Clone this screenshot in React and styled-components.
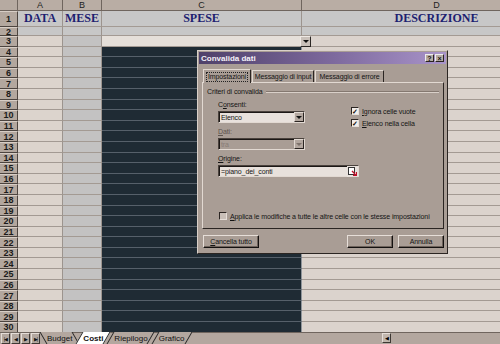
import React from 'react';
import styled, { createGlobalStyle } from 'styled-components';

const GlobalStyle = createGlobalStyle`
  html, body { margin: 0; padding: 0; background: #b1a59d; }
  body { width: 500px; height: 344px; overflow: hidden; font-family: 'Liberation Sans', Arial, sans-serif; }
`;

const COLS = [
  { key: 'A', width: 45, bg: '#dcd4cd' },
  { key: 'B', width: 39, bg: '#c3c2c2' },
  { key: 'C', width: 200, bg: '#1f2b34' },
  { key: 'D', width: 270, bg: '#dbd3cd' },
];

const Screen = styled.div`
  position: relative;
  width: 500px;
  height: 344px;
  overflow: hidden;
  display: flex;
  flex-direction: column;
`;

const Sheet = styled.div`
  height: 333px;
  overflow: hidden;
  display: flex;
  flex-direction: column;
`;

const Row = styled.div`
  display: flex;
  flex: none;
  height: ${p => p.h}px;
`;

const Corner = styled.div`
  width: 18px;
  flex: none;
  background: #b6aaa1;
  border-right: 1px solid #6f655e;
  border-bottom: 1px solid #6f655e;
  box-sizing: border-box;
`;

const ColHead = styled.div`
  width: ${p => p.w}px;
  flex: none;
  box-sizing: border-box;
  background: #b9ada4;
  border-right: 1px solid #6f655e;
  border-bottom: 1px solid #6f655e;
  font-size: 9px;
  line-height: 10px;
  color: #222;
  text-align: center;
`;

const RowHead = styled.div`
  width: 18px;
  flex: none;
  box-sizing: border-box;
  background: #b3a79e;
  border-top: 1px solid #d8cec6;
  border-right: 1px solid #4c443f;
  border-bottom: 1px solid #4c443f;
  font-size: 9px;
  font-weight: bold;
  color: #1a1a1a;
  display: flex;
  align-items: center;
  justify-content: center;
`;

const Cell = styled.div`
  width: ${p => p.w}px;
  flex: none;
  box-sizing: border-box;
  background: ${p => p.bg};
  border-right: 1px solid ${p => (p.dark ? '#8e949a' : '#9c948e')};
  border-bottom: 1px solid ${p => (p.dark ? '#56606a' : '#a39a93')};
  display: flex;
  align-items: center;
  justify-content: center;
`;

const Title = styled.span`
  font-family: 'Liberation Serif', 'Times New Roman', serif;
  font-weight: bold;
  font-size: 12px;
  color: #1d2170;
`;

const DropArrow = styled.div`
  position: absolute;
  left: 300px;
  top: 36px;
  width: 11px;
  height: 11px;
  box-sizing: border-box;
  background: #c9c0b9;
  border: 1px solid #2b2724;
  border-top-color: #efe9e4;
  border-left-color: #efe9e4;
  display: flex;
  align-items: center;
  justify-content: center;
  &::after {
    content: '';
    border-left: 3px solid transparent;
    border-right: 3px solid transparent;
    border-top: 3px solid #111;
  }
`;

/* sheet tabs */
const TabBar = styled.div`
  height: 11px;
  flex: none;
  background: #b3a79f;
  border-top: 1px solid #6f655e;
  display: flex;
  align-items: stretch;
  font-size: 8px;
  position: relative;
  padding-left: 1px;
`;

const NavBtn = styled.div`
  width: 9px;
  flex: none;
  box-sizing: border-box;
  border: 1px solid #3e3833;
  border-top-color: #e6ded8;
  border-left-color: #e6ded8;
  background: #b3a79f;
  display: flex;
  align-items: center;
  justify-content: center;
  font-size: 5px;
  letter-spacing: -1px;
  color: #111;
  margin-right: 1px;
`;

const SheetTab = styled.div`
  position: relative;
  padding: 0 4px;
  margin-left: ${p => (p.first ? 2 : 0)}px;
  margin-right: 3px;
  display: flex;
  align-items: center;
  color: #111;
  font-weight: ${p => (p.active ? 'bold' : 'normal')};
  z-index: ${p => (p.active ? 2 : 1)};
  &::before {
    content: '';
    position: absolute;
    inset: -1px 0 0 0;
    background: ${p => (p.active ? '#ffffff' : '#b3a79f')};
    border-left: 1px solid #222;
    border-right: 1px solid #222;
    transform: skewX(${p => (p.left ? '30deg' : '-30deg')});
    z-index: -1;
  }
`;

const ScrollArrow = styled.div`
  position: absolute;
  left: 382px;
  top: 0;
  width: 9px;
  height: 10px;
  box-sizing: border-box;
  border: 1px solid #3e3833;
  border-top-color: #e6ded8;
  border-left-color: #e6ded8;
  background: #c1b6ad;
  font-size: 5px;
  display: flex;
  align-items: center;
  justify-content: center;
`;

/* dialog */
const Dialog = styled.div`
  position: absolute;
  left: 197px;
  top: 50px;
  width: 251px;
  height: 204px;
  box-sizing: border-box;
  background: #a99d95;
  border: 1px solid #2b2522;
  border-top-color: #d9d0c9;
  border-left-color: #d9d0c9;
  font-family: 'Liberation Sans', Arial, sans-serif;
  font-size: 7px;
  letter-spacing: -0.1px;
  color: #141414;
  display: flex;
  flex-direction: column;
  white-space: nowrap;
`;

const TitleBar = styled.div`
  height: 12px;
  margin: 1px 1px 0 1px;
  background: linear-gradient(90deg, #4f416a 0%, #7e6a9e 55%, #a994c9 100%);
  display: flex;
  align-items: center;
  padding: 0 2px;
  color: #f4f0f8;
  font-weight: bold;
  font-size: 8px;
  letter-spacing: 0;
`;

const TitleText = styled.span`
  flex: 1;
`;

const CapBtn = styled.div`
  width: 9px;
  height: 8px;
  box-sizing: border-box;
  background: #b7aca4;
  border: 1px solid #2b2522;
  border-top-color: #eee;
  border-left-color: #eee;
  margin-left: 1px;
  font-size: 7px;
  font-weight: bold;
  color: #111;
  display: flex;
  align-items: center;
  justify-content: center;
  line-height: 1;
`;

const Tabs = styled.div`
  display: flex;
  margin: 5px 0 0 5px;
  height: 13px;
  position: relative;
  z-index: 1;
`;

const DTab = styled.div`
  box-sizing: border-box;
  width: ${p => p.w}px;
  height: ${p => (p.active ? 14 : 12)}px;
  margin-top: ${p => (p.active ? 0 : 1)}px;
  background: #a99d95;
  border: 1px solid #e2d9d2;
  border-right-color: #2b2522;
  border-bottom: none;
  display: flex;
  align-items: center;
  justify-content: center;
  margin-right: 1px;
  & > span {
    border: ${p => (p.active ? '1px dotted #222' : '1px solid transparent')};
    padding: 0 1px;
    line-height: 8px;
  }
`;

const Panel = styled.div`
  margin: 0 3px 0 4px;
  height: 147px;
  box-sizing: border-box;
  border: 1px solid #e2d9d2;
  border-right-color: #2b2522;
  border-bottom-color: #2b2522;
  padding: 5px 4px 0 4px;
  display: flex;
  flex-direction: column;
`;

const GroupHead = styled.div`
  display: flex;
  align-items: center;
  gap: 3px;
  &::after {
    content: '';
    flex: 1;
    height: 0;
    border-top: 1px solid #847870;
    border-bottom: 1px solid #d9d0c9;
  }
`;

const FormGrid = styled.div`
  display: grid;
  grid-template-columns: 133px 1fr;
  padding-left: 11px;
  margin-top: 5px;
`;

const Field = styled.div`
  display: flex;
  flex-direction: column;
  gap: 2px;
  padding-left: ${p => p.pl || 0}px;
  margin-bottom: ${p => p.mb || 0}px;
  color: ${p => (p.disabled ? '#5e544e' : '#141414')};
`;

const Label = styled.span`
  line-height: 9px;
`;

const Select = styled.div`
  width: ${p => p.w}px;
  height: 12px;
  box-sizing: border-box;
  background: ${p => (p.disabled ? '#a99d95' : '#e8e1dc')};
  border: 1px solid #4a423d;
  border-bottom-color: #e2d9d2;
  border-right-color: #e2d9d2;
  box-shadow: inset 1px 1px 0 #1c1816;
  display: flex;
  align-items: center;
  padding-left: 2px;
  color: ${p => (p.disabled ? '#877c75' : '#141414')};
`;

const SelectText = styled.span`
  flex: 1;
`;

const SelBtn = styled.div`
  width: 10px;
  height: 10px;
  box-sizing: border-box;
  background: #b3a79f;
  border: 1px solid #2b2522;
  border-top-color: #e2d9d2;
  border-left-color: #e2d9d2;
  display: flex;
  align-items: center;
  justify-content: center;
  &::after {
    content: '';
    border-left: 3px solid transparent;
    border-right: 3px solid transparent;
    border-top: 3px solid ${p => (p.disabled ? '#7c716a' : '#111')};
  }
`;

const Checks = styled.div`
  display: flex;
  flex-direction: column;
  gap: 4px;
  padding-top: 7px;
`;

const Check = styled.div`
  display: flex;
  align-items: center;
  gap: 3px;
`;

const Box = styled.div`
  width: 8px;
  height: 8px;
  flex: none;
  box-sizing: border-box;
  background: ${p => (p.checked ? '#f2eeea' : '#c9bfb8')};
  border: 1px solid #2b2522;
  border-right-color: #e6ded8;
  border-bottom-color: #e6ded8;
  display: flex;
  align-items: center;
  justify-content: center;
  font-size: 7px;
  font-weight: bold;
  line-height: 1;
  color: #111;
`;

const RefBtn = styled.div`
  width: 11px;
  height: 11px;
  flex: none;
  background: #e8e1dc;
  display: flex;
  align-items: center;
  justify-content: center;
`;

const Spacer = styled.div`
  flex: 1;
`;

const ApplyRow = styled(Check)`
  padding-left: 12px;
  margin-bottom: 8px;
`;

const Footer = styled.div`
  display: flex;
  align-items: center;
  margin: 6px 3px 0 5px;
`;

const Button = styled.div`
  width: ${p => p.w}px;
  height: 13px;
  box-sizing: border-box;
  border: 1px solid #141110;
  border-top-color: #e6ded8;
  border-left-color: #e6ded8;
  box-shadow: inset -1px -1px 0 #6d625b;
  margin-left: ${p => p.ml || 0}px;
  display: flex;
  align-items: center;
  justify-content: center;
`;

const rowHeights = [16, 9, ...Array(28).fill(10.6)];
const HEADINGS = { A: 'DATA', B: 'MESE', C: 'SPESE', D: 'DESCRIZIONE' };

function SheetRow({ n, h }) {
  return (
    <Row h={h}>
      <RowHead>{n}</RowHead>
      {COLS.map(c => {
        let bg = c.bg;
        let dark = false;
        if (n <= 2) bg = '#c7c7c7';
        else if (c.key === 'C' && n === 3) bg = '#e5dfd9';
        else if (c.key === 'C') dark = true;
        return (
          <Cell key={c.key} w={c.width} bg={bg} dark={dark}>
            {n === 1 && <Title>{HEADINGS[c.key]}</Title>}
          </Cell>
        );
      })}
    </Row>
  );
}

export default function App() {
  return (
    <Screen>
      <GlobalStyle />
      <Sheet>
        <Row h={11}>
          <Corner />
          {COLS.map(c => (
            <ColHead key={c.key} w={c.width}>{c.key}</ColHead>
          ))}
        </Row>
        {rowHeights.map((h, i) => (
          <SheetRow key={i} n={i + 1} h={h} />
        ))}
      </Sheet>
      <TabBar>
        <NavBtn>|◀</NavBtn>
        <NavBtn>◀</NavBtn>
        <NavBtn>▶</NavBtn>
        <NavBtn>▶|</NavBtn>
        <SheetTab left first>Budget</SheetTab>
        <SheetTab active>Costi</SheetTab>
        <SheetTab>Riepilogo</SheetTab>
        <SheetTab>Grafico</SheetTab>
        <ScrollArrow>◀</ScrollArrow>
      </TabBar>

      <DropArrow />

      <Dialog>
        <TitleBar>
          <TitleText>Convalida dati</TitleText>
          <CapBtn>?</CapBtn>
          <CapBtn>×</CapBtn>
        </TitleBar>
        <Tabs>
          <DTab active w={48}><span>Impostazioni</span></DTab>
          <DTab w={62}><span>Messaggio di input</span></DTab>
          <DTab w={69}><span>Messaggio di errore</span></DTab>
        </Tabs>
        <Panel>
          <GroupHead>Criteri di convalida</GroupHead>
          <FormGrid>
            <div>
              <Field mb={4}>
                <Label>C<u>o</u>nsenti:</Label>
                <Select w={87}>
                  <SelectText>Elenco</SelectText>
                  <SelBtn />
                </Select>
              </Field>
              <Field disabled mb={4}>
                <Label><u>D</u>ati:</Label>
                <Select w={87} disabled>
                  <SelectText>tra</SelectText>
                  <SelBtn disabled />
                </Select>
              </Field>
            </div>
            <Checks>
              <Check><Box checked>✓</Box><span><u>I</u>gnora celle vuote</span></Check>
              <Check><Box checked>✓</Box><span><u>E</u>lenco nella cella</span></Check>
            </Checks>
          </FormGrid>
          <Field pl={11}>
            <Label><u>O</u>rigine:</Label>
            <Select w={141}>
              <SelectText>=piano_dei_conti</SelectText>
              <RefBtn>
                <svg width="9" height="9" viewBox="0 0 9 9">
                  <rect x="0.5" y="0.5" width="6" height="7" fill="#fff" stroke="#333" strokeWidth="1" />
                  <path d="M4 4 L8.5 8.5 M5 8.5 H8.5 V5" stroke="#c0102a" strokeWidth="1.4" fill="none" />
                </svg>
              </RefBtn>
            </Select>
          </Field>
          <Spacer />
          <ApplyRow>
            <Box />
            <span><u>A</u>pplica le modifiche a tutte le altre celle con le stesse impostazioni</span>
          </ApplyRow>
        </Panel>
        <Footer>
          <Button w={56}><span><u>C</u>ancella tutto</span></Button>
          <Spacer />
          <Button w={46}>OK</Button>
          <Button w={46} ml={5}>Annulla</Button>
        </Footer>
      </Dialog>
    </Screen>
  );
}
